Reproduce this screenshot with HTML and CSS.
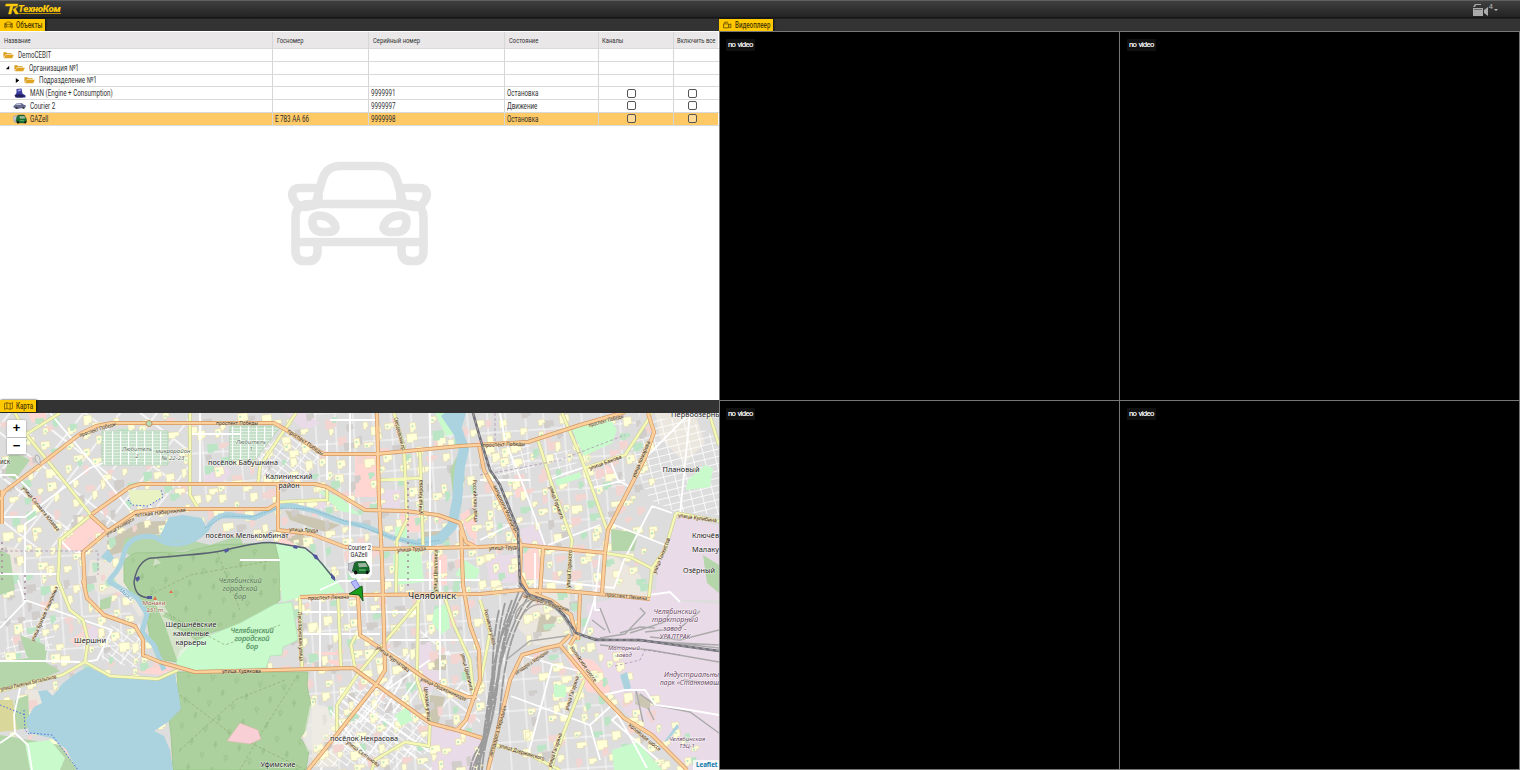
FILE: index.html
```html
<!DOCTYPE html>
<html lang="ru">
<head>
<meta charset="utf-8">
<title>ТехноКом</title>
<link rel="stylesheet" href="styles.css">
</head>
<body>
<svg width="0" height="0" class="defs">
  <symbol id="folder" viewBox="0 0 12 8"><path d="M.5 7V1h3l1 1h5v1.2H3z" fill="#d79b18"/><path d="M1 7.6 3 3.6h8.8L10 7.6z" fill="#e0a423"/></symbol>
  <symbol id="car" viewBox="0 0 146 106"><g fill="none" stroke="currentColor" stroke-width="8.6" stroke-linejoin="round"><path d="M29 43 35 21Q39 5 54 5H92Q107 5 111 21L117 43"/><path d="M32 27H13C5 27 4 34 8 40 13 48 17 47 32 43ZM114 27H133C141 27 142 34 138 40 133 48 129 47 114 43Z"/><path d="M9 82V57Q9 43 23 43H123Q137 43 137 57V82M9 81H137"/><path d="M9 80V90Q9 100 18 100H22Q31 100 31 90V80M115 80V90Q115 100 124 100H128Q137 100 137 90V80"/><path d="M26 61C26 54 32 54 37 55 43 56 49 62 49 67 48 71 44 71 36 71 29 71 26 67 26 61ZM120 61C120 54 114 54 109 55 103 56 97 62 97 67 98 71 102 71 110 71 117 71 120 67 120 61Z"/></g></symbol>
  <symbol id="camera" viewBox="0 0 16 12"><path d="M1 4h9v7H1zM2 3l1-2h6M10 6l4-2v7l-4-2" fill="none" stroke="currentColor" stroke-width="1.300"/></symbol>
  <symbol id="van" viewBox="0 0 20 15" preserveAspectRatio="none"><path d="M0 4 8 1v9l-5 3-3-4z" fill="#c3c7cd" stroke="#848a90" stroke-width=".6"/><path d="m6 3 3-1.5h7l3 5.500.5 5-3 1.500H8L4 11z" fill="#186d2d" stroke="#083b18" stroke-width=".6"/><path d="m9 3.300 7-.3 2 3.800-8 .5z" fill="#9db59f"/><path d="M10 10h6" stroke="#7cd28b"/><ellipse cx="7" cy="12.500" rx="1.600" ry="2" fill="#111"/><ellipse cx="17.500" cy="12.500" rx="1.300" ry="1.800" fill="#111"/></symbol>
</svg>
<div class="app">
  <header class="topbar">
    <svg class="logo-mark" viewBox="0 0 14 12"><path d="M1 1h12l-1 2H8L6 11H3.500L5.500 3H.5zM8.500 6l4-3M8 6.500 10.500 11h3L10.500 6l3-3" fill="#fdca0b" stroke="#fdca0b" stroke-width=".5"/></svg>
    <span class="brand">ТехноКом</span>
    <div class="channels"><svg viewBox="0 0 16 12"><path d="M0 4h10v8H0zM0 3l2-3h6v1H3L2 3zM11 6 15 3v9l-4-3z" fill="#aaa"/><path d="M1 5.500h8" stroke="#666"/></svg><span>4</span><i></i></div>
  </header>
  <main class="panes">
    <section class="left">
      <div class="tabs"><div class="tab tab-objects"><svg><use href="#car"/></svg><b>Объекты</b></div></div>
      <div class="objects">
        <div class="row head"><div><b>Название</b></div><div><b>Госномер</b></div><div><b>Серийный номер</b></div><div><b>Состояние</b></div><div><b>Каналы</b></div><div><b>Включить все</b></div></div>
        <div class="row"><div><svg class="folder"><use href="#folder"/></svg><b>DemoCEBIT</b></div><div></div><div></div><div></div><div></div><div></div></div>
        <div class="row level1"><div><svg class="arrow" viewBox="0 0 6 6"><path d="M5 1v4H1z"/></svg><svg class="folder"><use href="#folder"/></svg><b>Организация №1</b></div><div></div><div></div><div></div><div></div><div></div></div>
        <div class="row level2"><div><svg class="arrow" viewBox="0 0 6 6"><path d="M1 0v6l4-3z"/></svg><svg class="folder"><use href="#folder"/></svg><b>Подразделение №1</b></div><div></div><div></div><div></div><div></div><div></div></div>
        <div class="row item"><div><svg class="vehicle" viewBox="0 0 13 10"><path d="m3 1 5-.5 1 5 3 2v2H3L2 6l1-1z" fill="#3b3b9c"/><path d="m4 2 3-1 .5 2-3 .5z" fill="#9ba3dd"/><path d="m1 7 5-1 6 2-3 1.500H2z" fill="#21215f"/></svg><b>MAN (Engine + Consumption)</b></div><div></div><div><b>9999991</b></div><div><b>Остановка</b></div><div class="check"><i></i></div><div class="check"><i></i></div></div>
        <div class="row item"><div><svg class="vehicle" viewBox="0 0 13 10"><path d="m0 5 3-2.500 5-.5 2 1.500 2.500 1-.5 2-8 1.500-4-1.500z" fill="#666b8f"/><path d="m3 3 4-.5 1 1.500H2.500z" fill="#c2c5dd"/><path d="M2 7h2M9 7h2" stroke="#222" stroke-width="1.500"/></svg><b>Courier 2</b></div><div></div><div><b>9999997</b></div><div><b>Движение</b></div><div class="check"><i></i></div><div class="check"><i></i></div></div>
        <div class="row item selected"><div><svg class="vehicle"><use href="#van"/></svg><b>GAZell</b></div><div><b>Е 783 АА 66</b></div><div><b>9999998</b></div><div><b>Остановка</b></div><div class="check"><i></i></div><div class="check"><i></i></div></div>
        <div class="empty"><svg><use href="#car"/></svg></div>
      </div>
      <div class="tabs map-tabs"><div class="tab tab-map"><svg viewBox="0 0 11 9"><path d="M.5 1.500 3.500.5l4 1 3-1v7l-3 1-4-1-3 1zM3.500.5v7M7.500 1.500v7" fill="none" stroke="currentColor" stroke-width=".8"/></svg><b>Карта</b></div></div>
      <div class="map">
        <svg class="tiles" viewBox="0 413 719 357">
          <defs>
            <pattern id="streets" width="38" height="31" patternUnits="userSpaceOnUse" patternTransform="rotate(-4)"><path d="M0 1H38M1 0V31M19 0V31" stroke="#fafafa" fill="none"/></pattern>
            <pattern id="slant" width="29" height="34" patternUnits="userSpaceOnUse" patternTransform="rotate(38)"><path d="M0 1H29M1 0V34" stroke="#fff" stroke-width="1.300" fill="none"/></pattern>
            <pattern id="dense" width="11" height="6" patternUnits="userSpaceOnUse" patternTransform="rotate(37)"><path d="M0 .5H11M.5 0V6" stroke="#fff" stroke-width=".9" fill="none"/></pattern>
            <pattern id="dense2" width="11" height="7" patternUnits="userSpaceOnUse" patternTransform="rotate(-14)"><path d="M0 .5H11M.5 0V7" stroke="#fff" stroke-width=".8" fill="none"/></pattern>
            <pattern id="garden" width="8" height="3" patternUnits="userSpaceOnUse"><path d="M0 1H8" stroke="#a9cfae"/><path d="M.5 0V3" stroke="#fff" stroke-width="1.300"/></pattern>
            <pattern id="trees" width="24" height="26" patternUnits="userSpaceOnUse" patternTransform="rotate(8)"><path d="M5 9V5M3.500 6 5 2 6.500 6zM17 21v-3" fill="none" stroke="#8fba83" stroke-width=".7"/><circle cx="17" cy="16.500" r="1.800" fill="none" stroke="#8fba83" stroke-width=".7"/></pattern>
          </defs>
          <path fill="#dedddd" d="M0 413H719V770H0z"/>
          <path fill="url(#streets)" d="M300 413H480L520 600 480 770H300z"/>
          <path fill="url(#slant)" d="M0 413H190V505L85 550H0zM340 690 430 620 480 700V770H320z"/>
          <path fill="url(#streets)" d="M480 413H640L600 600H520zM500 655H570L640 770H490zM0 550H83L140 625V660H0zM190 424H275V500H190z"/>

          <g class="commerce">
            <path d="M60 548 64 533 92 517 107 532 84 552zM320 660h18v-8h-24v14h24zM312 655h28v11h-28zM524 549h19v30h-19zM134 672l30-8 10 5-14 6zM565 655l28 5 20 22-5 12-20-2zM460 515l15-10 2 35-8-4zM278 545h25l-3-15h-20zM355 455h23v42h-23zM605 463l10 9-8 7zM28 413h18v9H32zM515 490l10-5v10l-9 3zM400 516h20v16h-20zM432 555h15v30h-15zM70 640l14-9 3 8-10 8z"/>
            <path fill="#eadbe8" d="M586 605 655 590 665 600 719 604V770H690L625 712 605 680zM676 515 719 526V600H655L658 560zM430 722 465 732 485 740 475 770H432zM415 640h15l10 40-20 25zM285 413h20l15 10-15 8zM205 470l15-6 12 8-8 9-20 2zM380 490h20v18h-18zM520 530l18-7 7 23h-22zM485 555h35v28h-30zM300 500h25v8h-25zM90 625l10 4-6 13-12-5z"/>
            <path fill="#ece7de" d="M312 707h25v60h-25zM655 413h40l10 30-20 20-25-25zM520 590h50v55h-35l-20-20zM90 560h30l12 30-30 5-15-10zM25 690h30l-20 40-10-6zM0 545l20 4v30H0zM600 545l40 30 10 25-45-5zM122 590l30 12-12 15z"/>
            <path fill="#cbc6b2" d="M107 541 140 522 185 520 160 533 130 550 108 556zM270 530h25l15 10-10 7zM285 510 340 525 325 532 290 520zM420 532l20-1 10 8-18 6zM540 614l18 3-8 14-14 2zM433 655h13v15h-13zM430 695l15 2-7 28-10-3zM635 692l15 8v10l-15-6z"/>
          </g>
          <path fill="url(#dense)" d="M255 450 295 430 322 455 305 482 265 480zM340 690 360 676 430 724V752L385 766H318zM110 625 145 640 137 668 100 660z"/>
          <path fill="url(#dense2)" d="M628 450 655 418 690 420 719 440V515L676 512 650 500zM485 445H530L536 470 500 482zM545 455 570 450 580 470 552 480zM20 620H60L50 650 0 660zM580 475 615 468 617 485 590 490z"/>
          <g id="buildings"></g>
          <g fill="#c8facc">
            <path d="M572 430 608 415 617 430 612 443 584 456zM688 480 705 465 713 468 710 487 686 490zM276 543 305 549 325 565 345 592 310 595 282 602zM612 750 638 742 662 770H614zM434 610 447 603 450 628 441 635 432 622zM455 575 465 560 480 570 475 582zM393 555 420 548 424 582 395 585zM318 490 340 497 360 515 340 511zM395 527h12v14h-12zM435 413h20l3 20-12 3zM395 715l12-8 6 13-12 6zM554 685h12v12h-12zM555 480l25-8 1 6-24 8z"/>
          </g>
          <g fill="#b5d5aa">
            <path d="M611 529 638 533 634 551 612 551zM0 550 10 555 15 590 0 595zM10 450 30 460 15 480 5 475zM100 600 112 596 110 608 100 610zM0 662 28 658 47 650 45 662 60 671 40 680 0 690zM20 635 45 645 45 660 27 657zM15 700 28 695 30 728 14 730zM0 735 60 745 78 770H0zM703 555l16 10v28l-12-10zM145 535 170 535 210 545 240 535 243 545 130 556 122 550 125 538zM450 470l10-20 5 30-12 15z"/>
            <path fill="#c8facc" d="M25 743 50 740 65 758 60 770H30z"/>
            <path fill="#d9d79a" d="M0 700H13L17 730 0 732z"/>
          </g>
          <g fill="#add19e" stroke="#98c589" stroke-width=".8">
            <path id="forest" d="M124 560 135 553 185 552 215 545 275 543 279 560 280 600 271 608 240 624 210 633 190 645 176 662 164 660 150 638 146 613 134 597 124 582z"/>
            <path id="wood" d="M177 672H308L307 685 311 706 306 730 300 738 309 750 306 770H173L171 735 169 720 181 710 178 690z"/>
          </g>
          <path fill="url(#trees)" d="M130 555 275 548 280 600 180 645 150 620zM182 675H303L300 770H178z"/>
          <path class="park" d="M176 663 180 650 195 641 240 623 275 604 292 602 298 640 283 647 282 655 270 656 266 668 184 671z" fill="#c8facc" stroke="#b1dfb3" stroke-width=".7"/>
          <path fill="#f0eee8" d="M153 598 163 604 168 612 162 616 175 622 172 627 184 632 195 640 177 660 170 640 165 625zM155 558l6 5-8 3zM310 705 325 705 336 722 320 745 308 752 303 740z" opacity=".6"/>
          <path fill="none" stroke="#8faa72" stroke-width=".7" stroke-dasharray="3 2" d="M150 595 190 575 275 560M160 610 225 645 280 625M180 695 230 733 306 770M298 675 260 735 240 770M180 750 235 700 285 680M217 552 240 610"/>
          <path fill="#f8cfd5" stroke="#d7b5a9" stroke-width=".5" d="M227 741 240 723 258 730 261 739 250 744z"/>
          <g fill="#aad3df">
            <path d="M78 672 88 667 108 676 158 679 175 673 178 690 181 709 168 722 154 731 164 736 170 750 173 770H77L66 749 51 738 29 733 26 720 34 707 42 703 38 691 47 690 53 696 63 683z"/>
            <path d="M160 536 169 517 183 515 202 518 206 527 193 540 166 542zM101 557 108 549 114 558 110 563zM620 675 627 672 631 688 625 692zM448 413H466L461 430 449 426zM664 742 677 724 679 727 667 741z"/>
          </g>
          <g class="river"><path d="M240 517C225 511 213 517 207 529 190 547 170 548 155 537 137 534 126 541 123 557 119 575 108 577 110 582L137 598 147 614 142 632 154 645 164 670M218 516 240 516 254 518 275 508 289 505 315 511 343 522 365 526 393 538 417 543 429 543"/><path stroke-width="10" d="M418 544 440 539 452 526 457 501 460 466 464 449 458 432 445 413"/><path class="line" d="M205 528 225 516 250 517 278 508 310 509 351 523 390 537 417 544 440 540"/></g>
          <g stroke="#b3d1b7" stroke-width=".5"><path d="M102 431H168V465H102zM230 426H281L255 460H229z" fill="#dfeee0"/><path fill="url(#garden)" d="M102 431H168V465H102zM230 426H281L255 460H229z"/></g>

          <g class="yard"><path d="M521 585C513 610 500 635 495 660S487 710 479 770M525 590C507 620 502 650 497 690S485 735 482 770M529 595C505 635 500 665 491 710S480 748 475 770M535 598C515 617 505 655 501 700S491 740 487 770M512 600C495 646 494 680 487 720S476 740 470 770M499 610C490 648 494 690 488 730L478 765M517 597C500 640 500 665 494 705S481 750 478 770M505 603C493 650 497 690 484 740L472 770"/></g>
          <g class="sidings"><path d="M518 585 530 598 550 603 566 618 573 635 600 639 719 645M530 600Q515 607 515 620M573 635 530 641 506 660M525 612C535 600 555 600 568 625M600 638 625 634 645 613 640 608M610 633 600 608M620 633 640 627 655 628M605 630 592 620M630 633 665 622 670 612M645 632 680 628 700 611M650 637 680 640 719 630M675 643 719 648M600 645 650 650 719 662M640 694 655 705 690 712 719 733M636 690 643 722M648 708 654 720M683 680 719 684"/></g>

          <g class="white"><path id="whites" d="M0 517H25L90 468 103 463M25 580V524L37 516M50 413 97 469 130 510M0 475 15 475 30 490M18 580 25 602 0 628M25 600 60 612 112 630 97 660 80 663M0 661H45L80 662M20 688 14 715 15 733 28 745 32 770M15 733 0 743M75 552H85M200 413V485M190 434H240M60 540 72 552M0 574H60M240 560H280M327 440V480M350 413V550M378 420H330M385 580H480M300 612H420M320 600V670M302 634H380M385 640H480M386 690 430 660M320 590 340 581H380M430 413V590M440 560V680M480 480H530M480 540 520 520M500 413 505 440 525 490 545 545M548 480 590 465M548 545 600 525M612 524 665 545M652 506 624 560 614 588 540 580M535 553V590M600 553 596 592M610 460 618 480 630 487M593 488 625 480M640 463 690 413M690 413 680 515M652 506 672 513M649 595 670 592 680 602M596 595 590 615 582 637M600 610H595V590M604 695 625 690 645 690 655 705 690 710 719 715M522 655 555 665 583 672M552 665 528 755M511 696 590 725 612 705 632 740 647 768M590 725 600 760M618 715 612 720 658 760M340 690 430 752M392 680 375 705 360 722M420 675 393 713M365 753 330 710M402 680 385 710M480 700 460 690"/></g>

          <g class="casing yellow"><path id="yellow" d="M25 435 60 413M15 413 29 438 60 476 91 515 60 540 58 580 70 610 83 620 88 640 85 662 62 675 30 683 0 691M85 662 110 676 158 679 178 670M190 413V495L198 508M258 485 260 466 296 413M275 502 327 500V485M394 413 404 447 407 520 397 540 396 593M420 450 423 545M380 480 420 478M538 440 552 485 572 540 570 560 568 594M562 413 582 460 607 530M585 468 625 455 648 420 651 413M676 513 665 550 652 568 649 597M676 513 719 521M300 597 302 670M338 595 341 668M355 668 351 645 356 635M418 600 417 680 430 720 429 746 405 742 375 760 372 770M337 732V705L358 674 420 600M436 550V600M445 598 454 625 470 660 474 700M584 680 562 737 550 770M496 745 530 755 560 770M480 600 490 632 480 685M605 553 630 557 655 570M466 521 478 512M709 413 719 445"/></g>
          <g class="casing orange"><path id="orange" d="M0 500 5 491 45 461 80 434 96 426 112 423H274L288 431 323 454 376 454 460 446 528 442 580 425 625 412M2 490V524M90 515 108 531M92 514 130 487 140 484H315L327 487 365 510 405 511 438 515 460 523 466 542 478 548M85 590 83 552 108 531 136 512 160 509 240 509 268 509 278 503V530L311 534 345 547 382 549 478 547 521 545 606 553M278 485V503M377 413 379 500 382 560 385 670 378 682 338 733 308 770M300 597 358 595 480 594 521 590 565 591 620 596 650 599M83 580 87 598 104 615 135 626 143 640 143 655 160 662 195 672 353 668 430 723 460 731 482 738M358 595 360 635 403 663 430 682 468 697 477 697M461 530 463 585 470 625 479 650 480 680 466 720 457 730M479 445 484 470 500 500 521 545 520 575 528 591 552 601 571 615 576 635 570 645M488 770 498 730 510 680 522 655 546 648 560 645 600 693 624 718 652 735 687 770M648 413 654 432 645 458 608 530 605 553 602 593M543 548 540 594M580 595 578 640M560 645 570 635"/></g>
          <g class="rail"><path d="M473 413 480 438 490 470 500 485 518 530 520 583 529 595 551 602 564 615 576 633 596 640 640 640 719 651"/><path class="dash" d="M473 413 480 438 490 470 500 485 518 530 520 583 529 595 551 602 564 615 576 633 596 640 640 640 719 651"/></g>
          <path d="M0 551H98V575M480 475 520 468 560 460 625 435M495 413V443M615 666 640 660 645 650 680 655" fill="none" stroke="#a68dac" stroke-width=".7" stroke-dasharray="3 2"/>
          <path d="M25 575V600M408 482V590M2 580V540" fill="none" stroke="#a58b9c" stroke-dasharray="2 4" stroke-width="1.500"/>
          <path d="M128 490 132 505 148 506 163 497 161 490z" fill="#e9f2c2"/>
          <path d="M128 500 132 505 148 506 163 497 161 490M24 710 25 730 30 735M0 705 25 715M30 733 52 735 78 770" fill="none" stroke="#4d6fe1" stroke-dasharray="1.500 2"/>
          <path fill="none" stroke="#596171" stroke-width="1.500" d="M152 598C139 598 135 593 134 582 137 563 147 557 154 558 185 555 210 554 225 550 245 545 263 541 276 543L305 548 315 556 323 565 335 580"/>
          <path fill="#53589d" d="m135 578 4-2 1 3-3 3zM224 550l4-2 1 3-4 2zM294 545l4 1-1 3-4-1zM312 554l5 1 2 5-4-1zM331 573l4 4v4l-4-3zM147 596h5v3h-5z"/>
          <circle cx="149" cy="423.500" r="3" fill="#b9deb5" stroke="#c68e5c"/>
          <path d="M36 455q-3 5 4 10 1-10-4-10z" fill="#e0dfdf" stroke="#908e8e" stroke-width=".6"/>
          <path d="m153 600 2-4 2 4zM169 593l2-3 2 3z" fill="#e76f4d"/>

          <g class="streetnames">
            <text transform="translate(80 437) rotate(-18)" textLength="38">проспект Победы</text><text x="216" y="425" textLength="42">проспект Победы</text>
            <text transform="translate(287 432) rotate(34)" textLength="42">проспект Победы</text><text transform="translate(483 447) rotate(-2)" textLength="42">проспект Победы</text><text transform="translate(589 427) rotate(-15)" textLength="36">проспект Победы</text>
            <text transform="translate(22 488) rotate(51)" textLength="56">улица Салавата Юлаева</text><text transform="translate(107 536) rotate(-30)" textLength="32">улица Универси</text><text transform="translate(135 517) rotate(-6)" textLength="51">тетская Набережная</text>
            <text transform="translate(289 531) rotate(3)" textLength="29">улица Труда</text><text transform="translate(397 552) rotate(-4)" textLength="29">улица Труда</text><text transform="translate(489 550) rotate(-2)" textLength="30">улица Труда</text>
            <text transform="translate(308 600) rotate(-2)" textLength="41">проспект Ленина</text><text transform="translate(605 596) rotate(6)" textLength="42">проспект Ленина</text>
            <text transform="translate(394 418) rotate(76)" textLength="34">Свердловский пр.</text><text transform="translate(422 514) rotate(-89)" textLength="34">улица Кирова</text><text transform="translate(437 592) rotate(-89)" textLength="42">улица Цвиллинга</text>
            <text transform="translate(473 480) rotate(88)" textLength="42">Российская улица</text><text transform="translate(493 486) rotate(65)" textLength="52">автодорога Меридиан</text><text transform="translate(549 487) rotate(70)" textLength="34">улица Горького</text><text transform="translate(570 588) rotate(-87)" textLength="38">улица Горького</text>
            <text transform="translate(590 470) rotate(-20)" textLength="34">улица Бажова</text><text transform="translate(635 478) rotate(-67)" textLength="39">улица Комарова</text><text transform="translate(678 517) rotate(8)" textLength="39">улица Кулибина</text><text transform="translate(656 574) rotate(-68)" textLength="38">улица Танкистов</text>
            <text transform="translate(298 612) rotate(88)" textLength="49">Лесопарковая улица</text><text transform="translate(376 648) rotate(37)" textLength="40">улица Курчатова</text><text transform="translate(420 680) rotate(25)" textLength="50">улица Орджоникидзе</text><text transform="translate(424 687) rotate(84)" textLength="35">Цеховая улица</text><text transform="translate(461 654) rotate(76)" textLength="38">улица Цвиллинга</text>
            <text transform="translate(222 673)" textLength="39">улица Худякова</text><text transform="translate(34 642) rotate(-66)" textLength="60">улица Братьев Кашириных</text><text transform="translate(1 691) rotate(-13)" textLength="57">улица Лыжных Батальонов</text>
            <text transform="translate(346 743) rotate(37)" textLength="40">улица Салтыкова</text><text transform="translate(516 675) rotate(-34)" textLength="40">автодорога Меридиан</text><text transform="translate(523 597) rotate(18)" textLength="48">автодорога Меридиан</text><text transform="translate(570 648) rotate(55)" textLength="42">Копейское шоссе</text><text transform="translate(628 726) rotate(39)" textLength="40">Копейское шоссе</text>
            <text transform="translate(499 747) rotate(17)" textLength="47">улица Дзержинского</text><text transform="translate(568 711) rotate(-72)" textLength="36">улица Гагарина</text><text transform="translate(551 768) rotate(-72)" textLength="36">улица Гагарина</text><text transform="translate(492 757) rotate(-74)" textLength="53">автодорога Меридиан</text><text transform="translate(484 610) rotate(76)" textLength="36">Российская улица</text>
          </g>
          <g class="places">
            <text x="243" y="465" textLength="70">посёлок Бабушкина</text><text x="289" y="478.500" textLength="47">Калининский</text><text x="289" y="487.500" textLength="21">район</text><text x="247" y="537.500" textLength="83">посёлок Мелькомбинат</text><text x="681" y="472" textLength="37">Плановый</text><text x="671" y="417" class="start" textLength="50">Первоозёрны</text>
            <text x="692" y="538" class="start" textLength="27">Ключёв</text><text x="692" y="552" class="start" textLength="27">Малаку</text><text x="699" y="573" textLength="32">Озёрный</text><text x="90" y="643" textLength="32">Шершни</text><text x="191" y="627" textLength="51">Шершнёвские</text><text x="191" y="636" textLength="36">каменные</text><text x="191" y="645" textLength="31">карьеры</text><text x="364" y="741" textLength="68">посёлок Некрасова</text><text x="278" y="767" textLength="35">Уфимские</text><text x="0" y="464" class="start" textLength="10">иск</text>
            <text class="city" x="432" y="599" textLength="48">Челябинск</text>
          </g>
          <g class="wooded"><text x="240" y="582.500" textLength="43">Челябинский</text><text x="240" y="591" textLength="35">городской</text><text x="240" y="599" textLength="12">бор</text><g class="light"><text x="252" y="632.500" textLength="43">Челябинский</text><text x="252" y="641" textLength="35">городской</text><text x="252" y="649" textLength="12">бор</text></g></g>
          <g class="micro"><text x="137" y="451" textLength="30">Любитель</text><text x="137" y="458">2</text><text x="251" y="444" textLength="30">Любитель</text><text x="251" y="451">1</text><text x="173" y="453" textLength="35">микрорайон</text><text x="173" y="460" textLength="23">№ 22-23</text><text class="peak" x="154" y="605" textLength="23">Монахи</text><text class="peak" x="155" y="612" textLength="17">231 m</text><text class="water" transform="translate(125 596) rotate(40)">Миасс</text></g>
          <g class="industry"><text x="675" y="614" textLength="43">Челябинский</text><text x="675" y="622" textLength="46">тракторный</text><text x="675" y="631" textLength="24">завод –</text><text x="675" y="639" textLength="31">УРАЛТРАК</text><text class="start" x="664" y="676.500" textLength="55">Индустриальны</text><text class="start" x="660" y="684.500" textLength="59">парк «Станкомаш</text><g class="small"><text x="624" y="650" textLength="32">Моторный</text><text x="624" y="657">завод</text><text x="687" y="741" textLength="36">Челябинская</text><text x="687" y="748">ТЭЦ-1</text></g></g>
          <g class="marker"><path d="M349 543h21q2 0 2 2v29l-3 4h-7l-3 3-3-3h-4l-3-4v-29z" fill="#fff" opacity=".88"/><text x="359.500" y="550" textLength="23">Courier 2</text><text x="359" y="556.500" textLength="17">GAZell</text><use href="#van" x="348" y="560" width="22" height="15"/><path d="m351 582 5-2 6 11-4 2z" fill="#b7b9ff" stroke="#666bd5" stroke-width=".7"/><path d="m349 594 13-8 1 15-4-6z" fill="#19a11e" stroke="#145919"/></g>
        </svg>
        <div class="zoom-control"><button>+</button><button>−</button></div><div class="attribution">Leaflet</div>
      </div>
    </section>
    <section class="right"><div class="tabs"><div class="tab tab-video"><svg><use href="#camera"/></svg><b>Видеоплеер</b></div></div>
      <div class="videos"><div><span>no video</span></div><div><span>no video</span></div><div><span>no video</span></div><div><span>no video</span></div></div>
    </section>
  </main>
</div>
<script src="map.js"></script>
</body>
</html>
```
FILE: styles.css
```css
* { box-sizing: border-box; }
body { margin: 0; overflow: hidden; background: #333; font: 8.5px Roboto, sans-serif; color: #333; }
.defs { position: absolute; }
.app { display: flex; flex-direction: column; width: 1520px; height: 770px; }
.topbar { height: 18px; flex: none; display: flex; align-items: center; padding-left: 5px; background: linear-gradient(#3f3f3f, #232323); border-top: 1px solid #606060; border-bottom: 1px solid #161616; }
.logo-mark { width: 14px; height: 12px; }
.brand { margin-left: -1px; color: #fdca0b; font: italic 900 9.8px/9px Roboto, sans-serif; width: 43px; border-bottom: 1px solid #b99204; letter-spacing: -.3px; white-space: nowrap; }
.channels { margin-left: auto; padding-right: 22px; display: flex; align-items: flex-start; color: #b0b0b0; }
.channels svg { width: 16px; height: 12px; margin-top: 1px; }
.channels span { font-size: 8px; line-height: 7px; }
.channels i { border: 2.5px solid transparent; border-top-color: #bbb; margin: 6px 0 0 1px; }
.panes { flex: 1; min-height: 0; display: grid; grid-template: 752px / 719px 801px; }
.left { display: flex; flex-direction: column; min-width: 0; }
.right { display: flex; flex-direction: column; min-width: 0; }
.tabs { height: 13px; flex: none; background: #333; border-top: 1px solid #202020; }
.map-tabs { border-top: 0; }
.tab { height: 12px; display: flex; align-items: center; padding-left: 4px; background: #ffc800; color: #4c3b00; box-shadow: 1px 0 2px #111; white-space: nowrap; }
.tab svg { width: 9px; height: 8px; flex: none; margin-right: 3px; }
.tab b { width: 0; font-weight: 500; transform: scaleX(.73); }
.tab-objects { width: 45px; }
.tab-map { width: 36px; }
.tab-video { width: 54px; }
b { font-weight: 400; display: inline-block; transform: scaleX(.735); transform-origin: left; white-space: nowrap; }
.objects { height: 369px; flex: none; background: #fff; }
.row { height: 12.75px; display: grid; grid-template-columns: 273px 96px 136px 93.5px 75px 45.5px; border-bottom: 1px solid #dadada; }
.row > div { border-right: 1px solid #d6d6d6; display: flex; align-items: center; padding-left: 1.5px; min-width: 0; }
.row > div:first-child { padding-left: 3px; }
.row > div:last-child { border-right-color: #fff; }
.head { height: 18px; background: #e9e7e8; border-top: 1px solid #fff; font-size: 7.3px; }
.row.head > div { padding-left: 3.5px; }
.head b { transform: scaleX(.8); }
.folder { width: 11px; height: 8px; margin-right: 4px; }
.arrow { width: 5px; height: 5px; margin-right: 4px; }
.level1 > div:first-child { padding-left: 5px; }
.level2 > div:first-child { padding-left: 15px; }
.vehicle { width: 14px; height: 10px; margin-right: 2.5px; }
.row.item > div:first-child { padding-left: 13px; }
.selected { background: #ffc966; color: #2c2c2c; }
.check { justify-content: center; }
.row > .check:nth-child(5) { padding-right: 9px; }
.row > .check:last-child { padding-right: 9px; }
.check i { width: 9px; height: 9px; border: 1px solid #555; border-radius: 2px; background: #ffffff50; }
.empty { display: flex; justify-content: center; padding-top: 35.5px; color: #e5e5e5; }
.empty svg { width: 147px; height: 106px; }
.map { flex: 1; min-height: 0; overflow: hidden; display: grid; grid-template: 1fr / 1fr; }
.map > * { grid-area: 1 / 1; }
.tiles { width: 719px; height: 357px; display: block; font-family: "Noto Sans", sans-serif; }
.commerce { fill: #ffd6d1; }
.river { fill: none; stroke: #aad3df; stroke-width: 5; }
.river .line { stroke: #7babc4; stroke-width: .7; stroke-dasharray: 2 1; }
.white { fill: none; stroke: #fff; stroke-width: 1.8; }
.casing { fill: none; stroke-linejoin: round; }
.yellow { stroke: #c8cd96; stroke-width: 3.6; }
.yellow .core { stroke: #f6f8b6; stroke-width: 2.4; }
.orange { stroke: #d4965f; stroke-width: 4; }
.orange .core { stroke: #fbd09c; stroke-width: 2.7; }
.yard { fill: none; stroke: #9b9b9b; stroke-width: 1.8; stroke-dasharray: 13 1; }
.sidings { fill: none; stroke: #aaa; stroke-width: 1.4; }
.rail { fill: none; stroke: #6e6e76; stroke-width: 2.6; }
.rail .dash { stroke: #b6b6b8; stroke-width: .8; stroke-dasharray: 4 3; }
text { paint-order: stroke; stroke: #ffffffb0; stroke-width: 1.2px; stroke-linejoin: round; }
.streetnames { font-size: 5.4px; fill: #30251e; }
.streetnames text { stroke: #fbe4b9; stroke-width: .5px; }
.places { font-size: 7.3px; fill: #222; text-anchor: middle; }
.places .city { font-size: 9px; }
.places .start, .industry .start { text-anchor: start; }
.wooded { font-size: 6.9px; font-style: italic; fill: #557650; text-anchor: middle; }
.wooded text { stroke: #c2debb; stroke-width: .7px; }
.wooded .light { fill: #389054; }
.micro { font-size: 6px; font-style: italic; text-anchor: middle; fill: #5c7260; }
.micro .peak { fill: #a35843; font-style: normal; }
.micro .water { fill: #4e91b4; }
.industry { font-size: 7.1px; font-style: italic; text-anchor: middle; fill: #6d4967; }
.industry .small { font-size: 5.8px; }
.marker text { font: 6.3px Roboto, sans-serif; text-anchor: middle; fill: #222; }
.zoom-control { z-index: 1; margin: 7px 0 0 7px; width: 19px; height: 35px; display: flex; flex-direction: column; box-shadow: 0 0 2px #888; border-radius: 2px; overflow: hidden; }
.zoom-control button { flex: 1; border: 0; border-bottom: 1px solid #bbb; padding: 0; background: #fff; color: #000; font: bold 13px/16px "Liberation Sans", sans-serif; }
.attribution { z-index: 1; justify-self: end; align-self: end; width: 26px; height: 10px; padding-left: 3px; background: #ffffffc0; color: #0878a9; font: bold 6.2px/10px "Noto Sans", sans-serif; white-space: nowrap; }
.videos { flex: 1; display: grid; grid-template: 1fr 1fr / 1fr 1fr; gap: 1px; background: #777; border: 1px solid #777; }
.videos > div { background: #000; padding: 7px 6px; }
.videos > div:nth-child(even) { padding-left: 7px; }
.videos span { display: block; width: 29px; height: 12px; padding-left: 2px; background: #111; color: #fff; font: 500 7.8px/12px Roboto, sans-serif; white-space: nowrap; letter-spacing: -.75px; word-spacing: 1px; border-radius: 1px; }
```
FILE: map.js
```js
// Road cores are drawn over their wider casings.
for (const id of ['yellow', 'orange']) {
  const path = document.getElementById(id);
  const core = path.cloneNode();
  core.removeAttribute('id');
  core.setAttribute('class', 'core');
  path.parentNode.appendChild(core);
}
// Fitted labels keep their word spaces.
for (const label of document.querySelectorAll('text[textLength]')) {
  label.setAttribute('lengthAdjust', 'spacingAndGlyphs');
}
// Deterministic scatter of city buildings and courtyards.
let seed = 713;
const random = () => (seed = (seed * 16807) % 2147483647) / 2147483647;
let yellow = '', green = '', pink = '', gray = '';
for (let y = 416; y < 770; y += 13) {
  for (let x = 3; x < 719; x += 15) {
    const px = x + random() * 14 - 3, py = y + random() * 12 - 3;
    const w = 4 + random() * 7, h = 3 + random() * 5, kind = random();
    if (px > 585 && py > 590 && py - 590 < (px - 560) * 1.1) continue;
    if (px > 650 && py < 600) continue;
    if (px > 478 && px < 520 && py > 590) continue;
    const shape = `M${px.toFixed(1)} ${py.toFixed(1)}l${w.toFixed(1)}-1 1 ${h.toFixed(1)}-${(w * .4).toFixed(1)} .5v2l-${(w * .6).toFixed(1)} .5z`;
    if (kind < .62) {
      yellow += shape;
      if (random() > .5) green += `M${(px + 2).toFixed(1)} ${(py + 2).toFixed(1)}h2v2h-2z`;
    } else if (kind < .73) green += shape;
    else if (kind < .9) pink += shape;
    else gray += shape;
  }
}
document.getElementById('buildings').innerHTML =
  `<path d="${pink}" fill="#f3d5d2"/><path d="${gray}" fill="#d0cdcb"/><path d="${yellow}" fill="#ffffd8" stroke="#dfd3a8" stroke-width=".5"/><path d="${green}" fill="#bce5c6"/>`;
```
